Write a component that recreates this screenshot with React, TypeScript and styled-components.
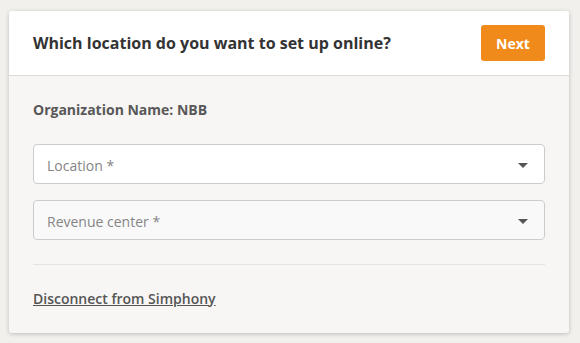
import styled, { createGlobalStyle } from "styled-components";

const GlobalStyle = createGlobalStyle`
    * {
        box-sizing: border-box;
    }
    body {
        margin: 0;
        background-color: #f1f0ed;
        font-family: "Open Sans", "Noto Sans", sans-serif;
    }
`;

const Page = styled.div`
    padding: 11px 11px 11px 9px;
`;

const Card = styled.div`
    width: 560px;
    background-color: #f7f6f4;
    border-radius: 3px;
    box-shadow: 0 1px 4px rgba(0, 0, 0, 0.22);
    overflow: hidden;
`;

const Header = styled.div`
    display: flex;
    justify-content: space-between;
    align-items: center;
    height: 65px;
    padding: 0 24px;
    background-color: #ffffff;
    border-bottom: 1px solid #dddbd8;
`;

const Title = styled.h1`
    margin: 0;
    font-size: 16px;
    font-weight: 700;
    color: #333333;
`;

const NextBtn = styled.button`
    width: 64px;
    height: 36px;
    border: none;
    border-radius: 3px;
    background-color: #f08a1a;
    color: #ffffff;
    font-family: inherit;
    font-size: 14px;
    font-weight: 700;
`;

const Body = styled.div`
    display: flex;
    flex-direction: column;
    padding: 24px;
`;

const OrgName = styled.div`
    font-size: 14px;
    line-height: 20px;
    font-weight: 700;
    color: #585858;
    margin-bottom: 24px;
`;

const Select = styled.div<{ $disabled?: boolean }>`
    display: flex;
    justify-content: space-between;
    align-items: center;
    height: 40px;
    padding: 2px 16px 0 13px;
    margin-bottom: ${(props) => (props.$disabled ? "0" : "16px")};
    background-color: ${(props) => (props.$disabled ? "#f9f9f9" : "#ffffff")};
    border: 1px solid #cccccc;
    border-radius: 4px;
    font-size: 14px;
    color: #858585;
`;

const Caret = styled.span`
    width: 0;
    height: 0;
    border-left: 5px solid transparent;
    border-right: 5px solid transparent;
    border-top: 5px solid #555555;
`;

const Divider = styled.hr`
    margin: 24px 0;
    border: none;
    border-top: 1px solid #e4e3e0;
`;

const DisconnectLink = styled.a`
    align-self: flex-start;
    font-size: 14px;
    line-height: 20px;
    font-weight: 600;
    color: #555555;
    text-decoration: underline;
    cursor: pointer;
`;

function App() {
    return (
        <>
            <GlobalStyle />
            <Page>
                <Card>
                    <Header>
                        <Title>Which location do you want to set up online?</Title>
                        <NextBtn>Next</NextBtn>
                    </Header>
                    <Body>
                        <OrgName>Organization Name: NBB</OrgName>
                        <Select>
                            <span>Location *</span>
                            <Caret />
                        </Select>
                        <Select $disabled>
                            <span>Revenue center *</span>
                            <Caret />
                        </Select>
                        <Divider />
                        <DisconnectLink>Disconnect from Simphony</DisconnectLink>
                    </Body>
                </Card>
            </Page>
        </>
    );
}

export default App;
